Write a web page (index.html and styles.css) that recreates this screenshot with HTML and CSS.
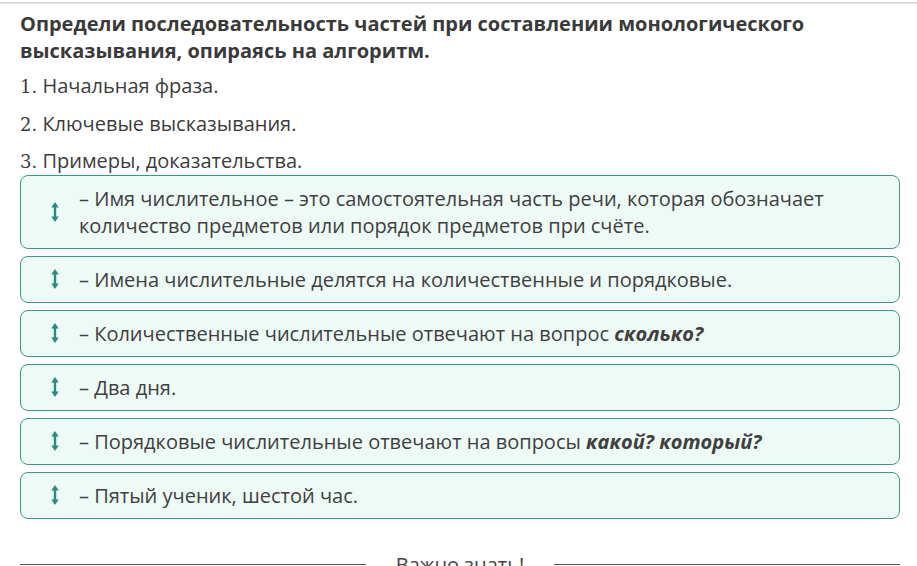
FILE: index.html
```html
<!DOCTYPE html>
<html lang="ru">
<head>
  <meta charset="UTF-8">
  <title>Последовательность частей</title>
  <link rel="stylesheet" href="styles.css">
</head>
<body>

<div class="task">
  <h3 class="task-title">Определи последовательность частей при составлении монологического высказывания, опираясь на алгоритм.</h3>

  <p class="step"><span class="num">1.</span> Начальная фраза.</p>
  <p class="step"><span class="num">2.</span> Ключевые высказывания.</p>
  <p class="step"><span class="num">3.</span> Примеры, доказательства.</p>

  <!-- sortable cards -->
  <div class="sort-list">
    <div class="sort-item">
      <span class="handle"><svg width="8" height="22" viewBox="0 0 8 22"><path d="M4 3v16" stroke="#2b8a7f" stroke-width="2.4"/><path d="M0.3 6.5L4 1l3.7 5.5zM0.3 15.5L4 21l3.7-5.5z" fill="#2b8a7f"/></svg></span>
      <span class="sort-text">– Имя числительное – это самостоятельная часть речи, которая обозначает количество предметов или порядок предметов при счёте.</span>
    </div>
    <div class="sort-item">
      <span class="handle"><svg width="8" height="22" viewBox="0 0 8 22"><path d="M4 3v16" stroke="#2b8a7f" stroke-width="2.4"/><path d="M0.3 6.5L4 1l3.7 5.5zM0.3 15.5L4 21l3.7-5.5z" fill="#2b8a7f"/></svg></span>
      <span class="sort-text">– Имена числительные делятся на количественные и порядковые.</span>
    </div>
    <div class="sort-item">
      <span class="handle"><svg width="8" height="22" viewBox="0 0 8 22"><path d="M4 3v16" stroke="#2b8a7f" stroke-width="2.4"/><path d="M0.3 6.5L4 1l3.7 5.5zM0.3 15.5L4 21l3.7-5.5z" fill="#2b8a7f"/></svg></span>
      <span class="sort-text">– Количественные числительные отвечают на вопрос <b><i>сколько?</i></b></span>
    </div>
    <div class="sort-item">
      <span class="handle"><svg width="8" height="22" viewBox="0 0 8 22"><path d="M4 3v16" stroke="#2b8a7f" stroke-width="2.4"/><path d="M0.3 6.5L4 1l3.7 5.5zM0.3 15.5L4 21l3.7-5.5z" fill="#2b8a7f"/></svg></span>
      <span class="sort-text">– Два дня.</span>
    </div>
    <div class="sort-item">
      <span class="handle"><svg width="8" height="22" viewBox="0 0 8 22"><path d="M4 3v16" stroke="#2b8a7f" stroke-width="2.4"/><path d="M0.3 6.5L4 1l3.7 5.5zM0.3 15.5L4 21l3.7-5.5z" fill="#2b8a7f"/></svg></span>
      <span class="sort-text">– Порядковые числительные отвечают на вопросы <b><i>какой? который?</i></b></span>
    </div>
    <div class="sort-item">
      <span class="handle"><svg width="8" height="22" viewBox="0 0 8 22"><path d="M4 3v16" stroke="#2b8a7f" stroke-width="2.4"/><path d="M0.3 6.5L4 1l3.7 5.5zM0.3 15.5L4 21l3.7-5.5z" fill="#2b8a7f"/></svg></span>
      <span class="sort-text">– Пятый ученик, шестой час.</span>
    </div>
  </div>

  <div class="divider">
    <span class="line"></span>
    <span class="divider-text">Важно знать!</span>
    <span class="line"></span>
  </div>
</div>

</body>
</html>
```

FILE: styles.css
```css
/* Basic page styles */
body {
  margin: 0;
  margin-top: 2px;
  font-family: "Open Sans", sans-serif;
  color: #3c3c3c;
  background-color: #fff;
  border-top: 2px solid #dedede;
}
.task {
  padding: 6px 17px 0 20px;
}
.task-title {
  margin: 0 0 4px;
  font-size: 20px;
  line-height: 27px;
  font-weight: bold;
  color: #3a3a3a;
}
.step {
  margin: 0;
  font-size: 20px;
  line-height: 36.5px;
}
.num {
  font-family: "DejaVu Serif", serif;
  font-size: 18px;
}
.sort-list {
  display: flex;
  flex-direction: column;
  gap: 7px;
  margin-top: -6px;
}
.sort-item {
  display: flex;
  align-items: center;
  min-height: 45px;
  padding: 0 12px 0 30px;
  border: 1px solid #3b968c;
  border-radius: 8px;
  background-color: #edfaf5;
}
.sort-item:first-child {
  min-height: 72px;
}
.handle {
  display: flex;
  width: 28px;
  flex-shrink: 0;
}
.sort-text {
  font-size: 20px;
  line-height: 27px;
  color: #3f3f3f;
}
.divider {
  display: flex;
  align-items: center;
  gap: 30px;
  margin-top: 32px;
}
.line {
  flex: 1;
  border-top: 1px solid #555;
}
.divider-text {
  font-size: 20px;
  color: #444;
}
```
